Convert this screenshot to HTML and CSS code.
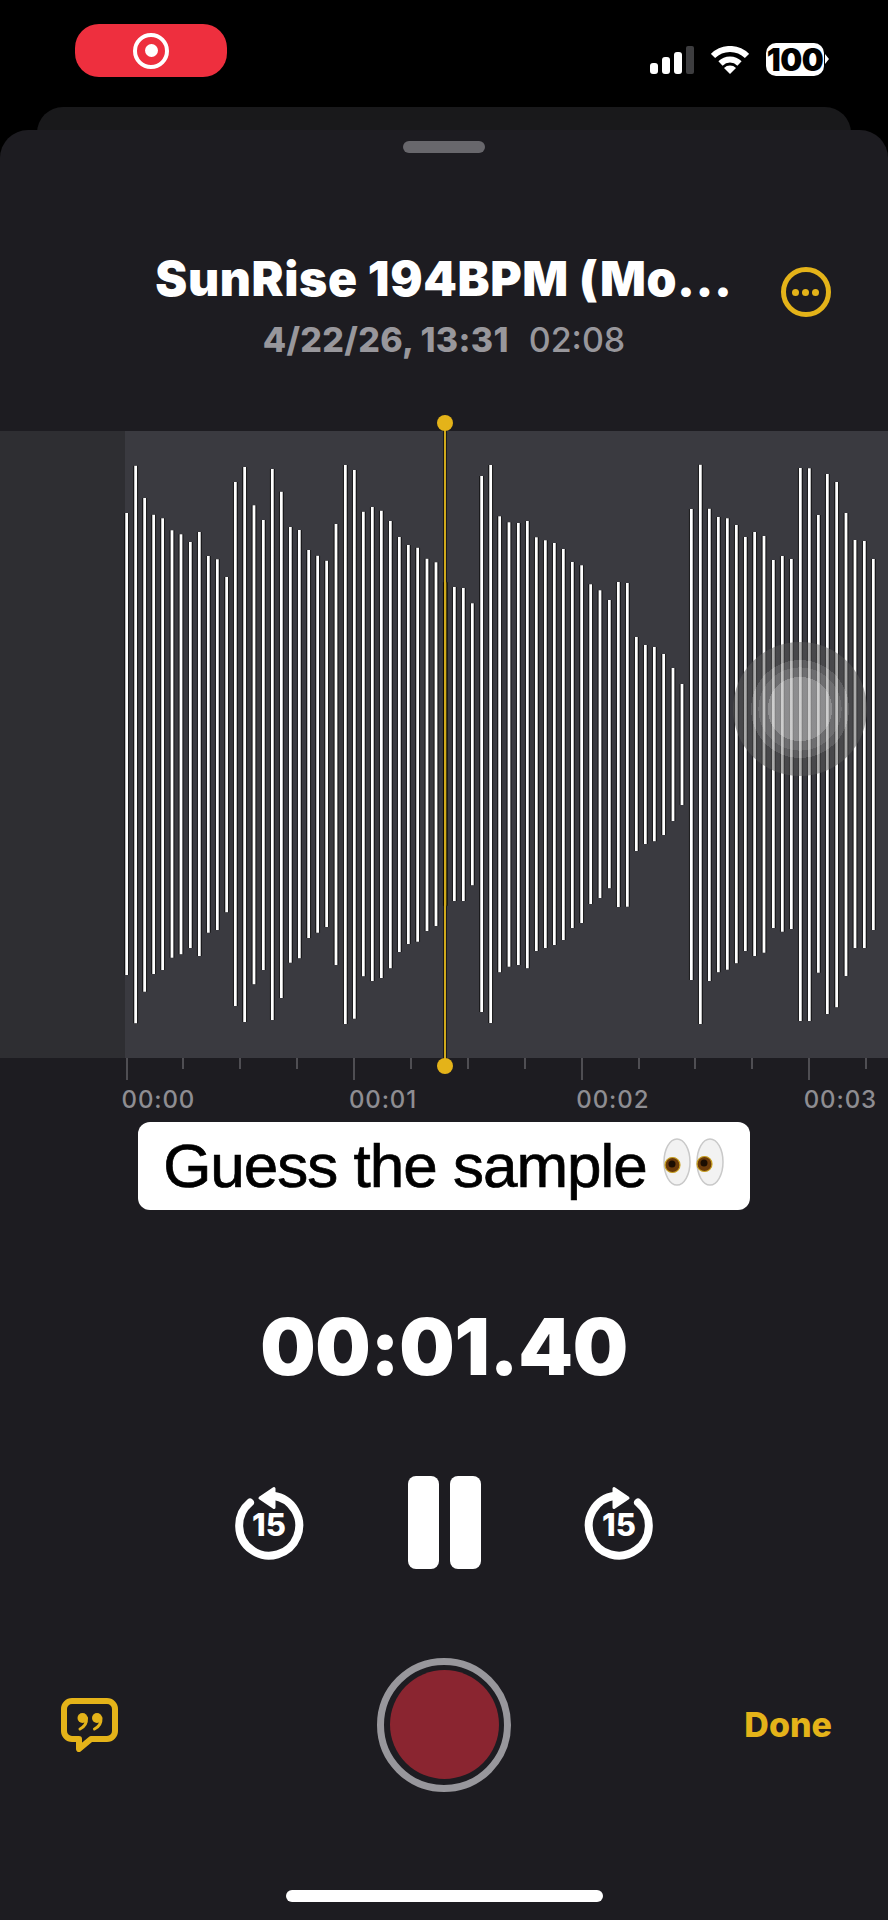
FILE: index.html
```html
<!DOCTYPE html>
<html lang="en">
<head>
<meta charset="utf-8">
<title>Voice Memo</title>
<link rel="stylesheet" href="styles.css">
</head>
<body>
<div class="screen">
  <div class="status">
    <div class="rec-pill">
      <span class="rec-target"><span class="rec-dot"></span></span>
    </div>
    <div class="status-right">
      <div class="signal"><i class="s1"></i><i class="s2"></i><i class="s3"></i><i class="s4"></i></div>
      <svg class="wifi" viewBox="0 0 38 28">
        <path class="wifi-arc" d="M2 10A24 24 0 0 1 36 10"/>
        <path class="wifi-arc" d="M9.5 17.5A13.5 13.5 0 0 1 28.5 17.5"/>
        <path class="wifi-fill" d="M19 28L13 22A8.5 8.5 0 0 1 25 22Z"/>
      </svg>
      <div class="battery">100</div>
    </div>
  </div>
  <div class="back-card"></div>
  <main class="card">
    <div class="handle"></div>
    <div class="title-row">
      <span></span>
      <h1 class="title">SunRise 194BPM (Mo...</h1>
      <div class="more-cell">
        <div class="more"><i></i><i></i><i></i></div>
      </div>
    </div>
    <div class="meta"><b>4/22/26, 13:31</b><span>02:08</span></div>

    <section class="wave">
      <svg class="bars" viewBox="0 -27 2664 1881" preserveAspectRatio="none">
        <g class="bar-set">
          <path d="M380 219V1605M407 77V1750M434 174V1655M461 224V1602M488 235V1590M516 271V1553M543 283V1543M571 306V1524M598 276V1548M625 348V1478M652 358V1470M680 411V1417M706 126V1698M734 81V1746M762 196V1633M790 240V1590M817 87V1740M844 155V1674M871 261V1568M898 270V1555M926 330V1494M953 347V1478M980 362V1461M1008 252V1575M1036 75V1752M1063 90V1736M1090 215V1609M1117 201V1623M1144 212V1614M1171 243V1585M1198 291V1536M1225 315V1512M1253 323V1505M1281 356V1473M1308 367V1458"/>
          <path class="bar-now" d="M1336 427V1397"/>
          <path d="M1363 441V1383M1390 444V1383M1417 490V1336M1445 108V1716M1472 75V1749M1499 229V1597M1527 247V1580M1555 249V1575M1582 243V1585M1609 292V1533M1636 301V1524M1663 309V1515M1690 327V1500M1717 366V1464M1745 376V1449M1772 433V1392M1800 451V1374M1828 480V1345M1855 426V1401M1882 429V1400M1909 591V1233M1936 615V1212M1963 621V1204M1991 642V1185M2019 684V1143M2046 732V1095M2074 207V1620M2101 74V1752M2128 206V1623M2155 231V1597M2182 235V1589M2209 255V1570M2236 291V1533M2264 276V1548M2292 288V1538M2320 360V1464M2347 348V1475M2374 357V1467M2401 84V1743M2428 85V1743M2455 225V1598M2482 102V1722M2510 126V1702M2538 219V1608M2565 300V1524M2593 303V1524M2620 357V1470"/>
        </g>
      </svg>
      <div class="touch"></div>
      <div class="playhead"></div>
    </section>

    <div class="ticks">
      <i class="tick major"></i><i class="tick"></i><i class="tick"></i><i class="tick"></i>
      <i class="tick major"></i><i class="tick"></i><i class="tick"></i><i class="tick"></i>
      <i class="tick major"></i><i class="tick"></i><i class="tick"></i><i class="tick"></i>
      <i class="tick major"></i><i class="tick"></i>
    </div>
    <div class="labels"><span>00:00</span><span>00:01</span><span>00:02</span><span>00:03</span></div>

    <div class="caption">
      <span>Guess the sample</span>
      <svg class="eyes" viewBox="0 0 62 48">
        <ellipse class="eye" cx="14" cy="24" rx="13" ry="23"/>
        <ellipse class="eye" cx="47" cy="24" rx="13" ry="23"/>
        <circle class="iris" cx="9.5" cy="27" r="7.5"/>
        <circle class="iris" cx="41.5" cy="26" r="7.5"/>
        <circle class="pupil" cx="9" cy="26" r="3.5"/>
        <circle class="pupil" cx="41" cy="25" r="3.5"/>
      </svg>
    </div>

    <div class="timer">00:01.40</div>

    <div class="controls">
      <svg class="skip" viewBox="0 1.5 80 84">
        <path class="skip-arc" d="M21 23A30 30 0 1 0 44 16.3"/>
        <path class="skip-head" d="M31 18.5L45 9V28Z"/>
        <text class="skip-num" x="40" y="56">15</text>
      </svg>
      <div class="pause"><i></i><i></i></div>
      <svg class="skip" viewBox="0 1.5 80 84">
        <path class="skip-arc" d="M59 23A30 30 0 1 1 36 16.3"/>
        <path class="skip-head" d="M49 18.5L35 9V28Z"/>
        <text class="skip-num" x="40" y="56">15</text>
      </svg>
    </div>

    <div class="bottom">
      <svg class="quote" viewBox="0 0 57 54">
        <path class="quote-box" d="M11 3H46A8 8 0 0 1 54 11V33A8 8 0 0 1 46 41H30L18 51V41H11A8 8 0 0 1 3 33V11A8 8 0 0 1 11 3Z"/>
        <circle class="quote-dot" cx="21.5" cy="20" r="5"/>
        <circle class="quote-dot" cx="36" cy="20" r="5"/>
        <path class="quote-tail" d="M25.5 20C25.8 25 23 29 19 31"/>
        <path class="quote-tail" d="M40 20C40.3 25 37.5 29 33.5 31"/>
      </svg>
      <div class="record"><div class="record-core"></div></div>
      <div class="done">Done</div>
    </div>

    <div class="home-bar"></div>
  </main>
</div>
</body>
</html>
```
FILE: styles.css
```css
* { box-sizing: border-box; }
html, body { margin: 0; padding: 0; background: #000; }
body { font-family: Inter, "Liberation Sans", sans-serif; color: #fff; }
.screen { width: 888px; height: 1920px; overflow: hidden; background: #000; }

/* status bar */
.status { height: 107px; padding: 24px 64px 0 75px; display: flex; justify-content: space-between; align-items: flex-start; }
.rec-pill { width: 152px; height: 53px; border-radius: 24px; background: #ee2f3e; display: flex; align-items: center; justify-content: center; }
.rec-target { width: 36px; height: 36px; border: 4px solid #fff; border-radius: 50%; display: flex; align-items: center; justify-content: center; }
.rec-dot { width: 13px; height: 13px; border-radius: 50%; background: #fff; }
.status-right { margin-top: 19px; height: 33px; display: flex; align-items: center; }
.signal { display: flex; align-items: flex-end; gap: 4px; height: 28px; }
.signal i { width: 8px; border-radius: 3px; background: #fff; }
.s1 { height: 11px; }
.s2 { height: 17px; }
.s3 { height: 22px; }
.signal .s4 { height: 28px; background: #3d3d3f; border-radius: 2px; }
.wifi { width: 38px; height: 28px; margin-left: 17px; }
.wifi-arc { fill: none; stroke: #fff; stroke-width: 6; }
.wifi-fill { fill: #fff; }
.battery { position: relative; width: 58px; height: 33px; margin-left: 17px; background: #fff; border-radius: 10px; color: #000; font-weight: 900; font-size: 31px; line-height: 33px; letter-spacing: -.5px; text-align: center; }
.battery::after { content: ""; position: absolute; left: 59px; top: 11px; border-left: 4px solid #fff; border-top: 5px solid transparent; border-bottom: 5px solid transparent; }

/* cards */
.back-card { height: 40px; margin: 0 37px; background: #19191b; border-radius: 26px 26px 0 0; }
.card { height: 1790px; margin-top: -17px; position: relative; background: #1d1c21; border-radius: 28px 28px 0 0; padding-top: 11px; }
.handle { width: 82px; height: 12px; margin: 0 auto; border-radius: 6px; background: #68676c; }

/* header */
.title-row { margin-top: 97px; height: 58px; display: grid; grid-template-columns: 1fr auto 1fr; align-items: start; }
.title { margin: 0; font-size: 48px; line-height: 58px; font-weight: 900; white-space: nowrap; letter-spacing: .63px; }
.more-cell { padding: 17px 0 0 48px; }
.more { width: 50px; height: 50px; border: 5px solid #e4b319; border-radius: 50%; display: flex; align-items: center; justify-content: center; gap: 3px; }
.more i { width: 7px; height: 7px; border-radius: 50%; background: #e4b319; }
.meta { margin-top: 12px; display: flex; justify-content: center; gap: 20px; font-size: 34px; line-height: 40px; color: #98979c; }
.meta b { font-weight: 800; letter-spacing: .3px; }
.meta span { font-weight: 500; }

/* waveform */
.wave { margin-top: 71px; height: 627px; position: relative; background: linear-gradient(90deg, #2e2e32 125px, #3a3a40 125px); }
.bars { display: block; width: 888px; height: 627px; }
.bar-set { fill: none; stroke: #fff; stroke-width: 8.4; filter: drop-shadow(3px 0 0 rgba(0,0,0,.75)) drop-shadow(-3px 0 0 rgba(0,0,0,.75)); }
.bar-now { stroke: #dcb91f; }
.touch { position: absolute; left: 733px; top: 211px; width: 134px; height: 134px; border-radius: 50%; background: radial-gradient(circle closest-side, rgba(181,181,181,.68) 0 48%, rgba(147,147,147,.59) 48% 62%, rgba(126,126,126,.53) 62% 73%, rgba(86,86,86,.5) 73% 100%); }
.playhead { position: absolute; left: 444px; top: -8px; width: 2px; height: 643px; background: #cfa91c; box-shadow: 0 0 0 1px rgba(0,0,0,.55); }
.playhead::before, .playhead::after { content: ""; position: absolute; left: -7px; width: 16px; height: 16px; border-radius: 50%; background: #e4b319; }
.playhead::before { top: -8px; }
.playhead::after { bottom: -8px; }

/* timeline */
.ticks { height: 22px; padding-left: 125.5px; display: flex; align-items: flex-start; }
.tick { flex: 0 0 56.9px; height: 11px; border-left: 2px solid #4f4e53; }
.tick.major { height: 22px; }
.labels { margin-top: 5px; height: 30px; padding-left: 121.5px; display: flex; font-size: 24px; line-height: 30px; font-weight: 500; color: #8e8d92; letter-spacing: .9px; white-space: nowrap; }
.labels span { flex: 0 0 227.4px; }

/* caption */
.caption { margin: 7px 0 0 138px; width: 612px; height: 88px; background: #fff; border-radius: 12px; display: flex; align-items: center; justify-content: center; gap: 16px; color: #000; font-family: "Liberation Sans", Arial, sans-serif; font-size: 62px; line-height: 84px; letter-spacing: -1px; -webkit-text-stroke: .7px #000; }
.caption span { white-space: nowrap; }
.eyes { width: 62px; height: 48px; flex: none; margin-top: -8px; }
.eye { fill: #f2f2f2; stroke: #c9c9c9; stroke-width: 1.5; }
.iris { fill: #6b3a0a; stroke: #c8a020; stroke-width: 1.2; }
.pupil { fill: #1b0d02; }

/* timer */
.timer { margin-top: 92px; text-align: center; font-size: 78px; line-height: 90px; font-weight: 900; letter-spacing: -.3px; }

/* transport */
.controls { margin-top: 84px; height: 93px; display: flex; justify-content: center; align-items: center; gap: 98.5px; }
.skip { width: 80px; height: 84px; flex: none; }
.skip-arc { fill: none; stroke: #fff; stroke-width: 8; stroke-linecap: round; }
.skip-head { fill: #fff; stroke: #fff; stroke-width: 3; stroke-linejoin: round; }
.skip-num { fill: #fff; font-family: Inter, sans-serif; font-weight: 800; font-size: 31px; text-anchor: middle; }
.pause { display: flex; gap: 11px; }
.pause i { width: 31px; height: 93px; background: #fff; border-radius: 8px; }

/* bottom row */
.bottom { margin-top: 88px; height: 135px; position: relative; display: grid; grid-template-columns: 1fr 134px 1fr; align-items: center; }
.quote { width: 57px; height: 54px; margin: 0 0 0 61px; display: block; }
.quote-box { fill: none; stroke: #e4b319; stroke-width: 6; stroke-linejoin: round; }
.quote-dot { fill: #e4b319; }
.quote-tail { fill: none; stroke: #e4b319; stroke-width: 3; stroke-linecap: round; }
.record { width: 134px; height: 134px; border: 7px solid #98979c; border-radius: 50%; display: flex; align-items: center; justify-content: center; }
.record-core { width: 109px; height: 109px; border-radius: 50%; background: #8a2530; }
.done { justify-self: end; padding-right: 56px; font-size: 34px; line-height: 40px; font-weight: 800; color: #e4b319; }

.home-bar { margin: 98px auto 0; width: 317px; height: 12px; border-radius: 6px; background: #fff; }
```
